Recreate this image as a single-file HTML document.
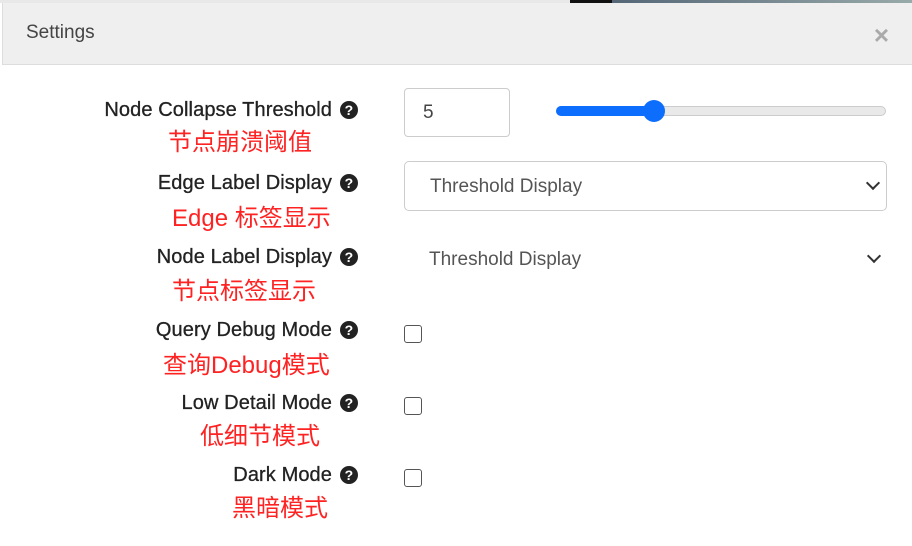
<!DOCTYPE html>
<html><head><meta charset="utf-8"><style>
body{margin:0;width:912px;height:546px;background:#fff;position:relative;overflow:hidden;font-family:"Liberation Sans","Noto Sans CJK SC",sans-serif}
.top{position:absolute;left:0;top:0;width:912px;height:3px;background:#e8e8e8}
.top .d{position:absolute;left:570px;top:0;width:42px;height:3px;background:#111}
.top .g{position:absolute;left:612px;top:0;width:300px;height:3px;background:linear-gradient(90deg,#567,#9aa)}
.hdr{position:absolute;left:2px;top:3px;width:910px;height:61px;background:#efefef;border-bottom:1px solid #ddd;border-left:1px solid #ddd}
.hdr .t{position:absolute;left:23px;top:19px;font-size:19px;color:#444}
.hdr .x{position:absolute;right:24px;top:17px;font-size:26px;color:#aaa;font-weight:bold}
.l{position:absolute;right:554px;font-size:20px;color:#222;white-space:nowrap;letter-spacing:0.1px;-webkit-text-stroke:0.3px #222}
.q{display:inline-block;width:18px;height:18px;border-radius:50%;background:#222;color:#fff;font-size:14px;font-weight:bold;text-align:center;line-height:18px;margin-left:8px;vertical-align:1px;-webkit-text-stroke:0}
.r{position:absolute;font-size:24px;color:#f22;white-space:nowrap}
.inp{position:absolute;left:404px;top:88px;width:106px;height:49px;border:1px solid #ccc;border-radius:4px;box-sizing:border-box;font-size:19px;color:#444;padding:13px 0 0 18px}
.sel{position:absolute;left:404px;width:483px;height:50px;box-sizing:border-box;font-size:19px;color:#555;padding:14px 0 0 25px;border-radius:5px}
.chev{position:absolute;right:8px;top:16px;width:8px;height:8px;border-right:2px solid #333;border-bottom:2px solid #333;transform:rotate(45deg)}
.cb{position:absolute;left:404px;width:18px;height:18px;border:1px solid #555;border-radius:3px;box-sizing:border-box}
</style></head><body>
<div class="top"><div class="d"></div><div class="g"></div></div>
<div class="hdr"><div class="t">Settings</div><div class="x">×</div></div>

<div class="l" style="top:99px">Node Collapse Threshold<span class="q">?</span></div>
<div class="r" style="top:122px;left:168px">节点崩溃阈值</div>
<div class="inp">5</div>
<div style="position:absolute;left:556px;top:106px;width:330px;height:10px;border-radius:5px;background:#e9e9e9;border:1px solid #ccc;box-sizing:border-box"></div>
<div style="position:absolute;left:556px;top:106px;width:96px;height:10px;border-radius:5px 0 0 5px;background:#0d6efd"></div>
<div style="position:absolute;left:643px;top:100px;width:22px;height:22px;border-radius:50%;background:#0d6efd"></div>

<div class="l" style="top:172px">Edge Label Display<span class="q">?</span></div>
<div class="r" style="top:198px;left:172px">Edge 标签显示</div>
<div class="sel" style="top:161px;border:1px solid #ccc">Threshold Display<div class="chev"></div></div>

<div class="l" style="top:246px">Node Label Display<span class="q">?</span></div>
<div class="r" style="top:271px;left:172px">节点标签显示</div>
<div class="sel" style="top:235px">Threshold Display<div class="chev" style="right:8px"></div></div>

<div class="l" style="top:319px">Query Debug Mode<span class="q">?</span></div>
<div class="r" style="top:345px;left:163px">查询Debug模式</div>
<div class="cb" style="top:325px"></div>

<div class="l" style="top:392px">Low Detail Mode<span class="q">?</span></div>
<div class="r" style="top:416px;left:200px">低细节模式</div>
<div class="cb" style="top:397px"></div>

<div class="l" style="top:464px">Dark Mode<span class="q">?</span></div>
<div class="r" style="top:488px;left:232px">黑暗模式</div>
<div class="cb" style="top:469px"></div>
</body></html>
